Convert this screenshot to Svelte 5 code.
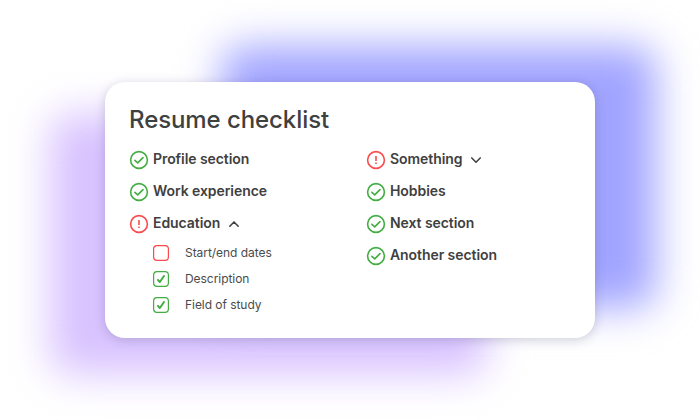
<script>
  const left = [
    { label: 'Profile section', ok: true },
    { label: 'Work experience', ok: true },
    { label: 'Education', ok: false, open: true }
  ];
  const right = [
    { label: 'Something', ok: false, open: false },
    { label: 'Hobbies', ok: true },
    { label: 'Next section', ok: true },
    { label: 'Another section', ok: true }
  ];
  const details = [
    { label: 'Start/end dates', done: false },
    { label: 'Description', done: true },
    { label: 'Field of study', done: true }
  ];
</script>

{#snippet row(item)}
  <div class="row">
    <svg class="status" class:bad={!item.ok} viewBox="0 0 20 20">
      <circle cx="10" cy="10" r="8.4" />
      {#if item.ok}
        <path d="M5.9 10.3 L8.7 12.9 L14 7.6" />
      {:else}
        <path class="mark" d="M10 5.9 V11 M10 12.5 V14.1" />
      {/if}
    </svg>
    <span class="label">{item.label}</span>
    {#if !item.ok}
      <svg class="chevron" viewBox="0 0 12 12">
        <path d={item.open ? 'M1.8 8.3 L6 3.9 L10.2 8.3' : 'M1.8 3.9 L6 8.3 L10.2 3.9'} />
      </svg>
    {/if}
  </div>
{/snippet}

<main>
  <div class="glow purple"></div>
  <div class="glow blue"></div>
  <section class="card">
    <h1>Resume checklist</h1>
    <div class="columns">
      <div class="column">
        {#each left as item}{@render row(item)}{/each}
        <ul>
          {#each details as detail}
            <li>
              <svg class="box" class:bad={!detail.done} viewBox="0 0 16 16">
                <rect x="0.6" y="0.6" width="14.8" height="14.8" rx="3.4" />
                {#if detail.done}<path d="M4.9 8.9 L6.8 11 L11 5" />{/if}
              </svg>
              <span>{detail.label}</span>
            </li>
          {/each}
        </ul>
      </div>
      <div class="column">
        {#each right as item}{@render row(item)}{/each}
      </div>
    </div>
  </section>
</main>

<style>
  :global(body) { background: #fff; }
  main {
    position: relative;
    box-sizing: border-box;
    width: 700px;
    height: 420px;
    padding: 82px 105px;
    overflow: hidden;
    font-family: Inter, 'Liberation Sans', sans-serif;
    color: #3f4040;
  }
  .glow { position: absolute; border-radius: 20px; filter: blur(20px); }
  .blue { left: 222px; top: 46px; width: 434px; height: 262px; background: #a1a4ff; }
  .purple { left: 50px; top: 114px; width: 437px; height: 260px; background: #d8c2ff; }
  .card {
    position: relative;
    box-sizing: border-box;
    width: 490px;
    height: 256px;
    padding: 22px 24px;
    border-radius: 20px;
    background: #fff;
    box-shadow: 0 2px 11px rgba(40, 40, 60, 0.2);
  }
  h1 {
    margin: 0;
    font-size: 24px;
    line-height: 32px;
    font-weight: 500;
    letter-spacing: -0.08px;
    white-space: nowrap;
  }
  .columns { display: flex; padding-top: 7px; }
  .column { width: 237px; flex: none; }
  .column:last-child { width: 205px; }
  .row { display: flex; align-items: center; height: 32px; }
  .status { width: 20px; height: 20px; flex: none; margin-top: 1px; }
  .label {
    margin-left: 4px;
    font-size: 14px;
    line-height: 20px;
    font-weight: 560;
    letter-spacing: -0.07px;
    white-space: nowrap;
  }
  svg { display: block; fill: none; stroke: #43ad43; stroke-width: 1.6; stroke-linecap: round; stroke-linejoin: round; }
  svg.bad { stroke: #f94b4e; }
  .mark { stroke-width: 1.6; stroke-linecap: butt; }
  .chevron { width: 12px; height: 12px; margin: 2px 0 0 7.5px; stroke: #3f4040; stroke-width: 1.5; }
  ul { margin: 0; padding: 1px 0 0 24px; list-style: none; }
  li { display: flex; align-items: center; height: 26px; font-size: 12px; line-height: 18px; color: #4a4b4b; }
  .box { width: 16px; height: 16px; stroke-width: 1.2; }
  .box path { stroke-width: 2; }
  li span { margin-left: 16px; letter-spacing: -0.05px; white-space: nowrap; }
</style>
